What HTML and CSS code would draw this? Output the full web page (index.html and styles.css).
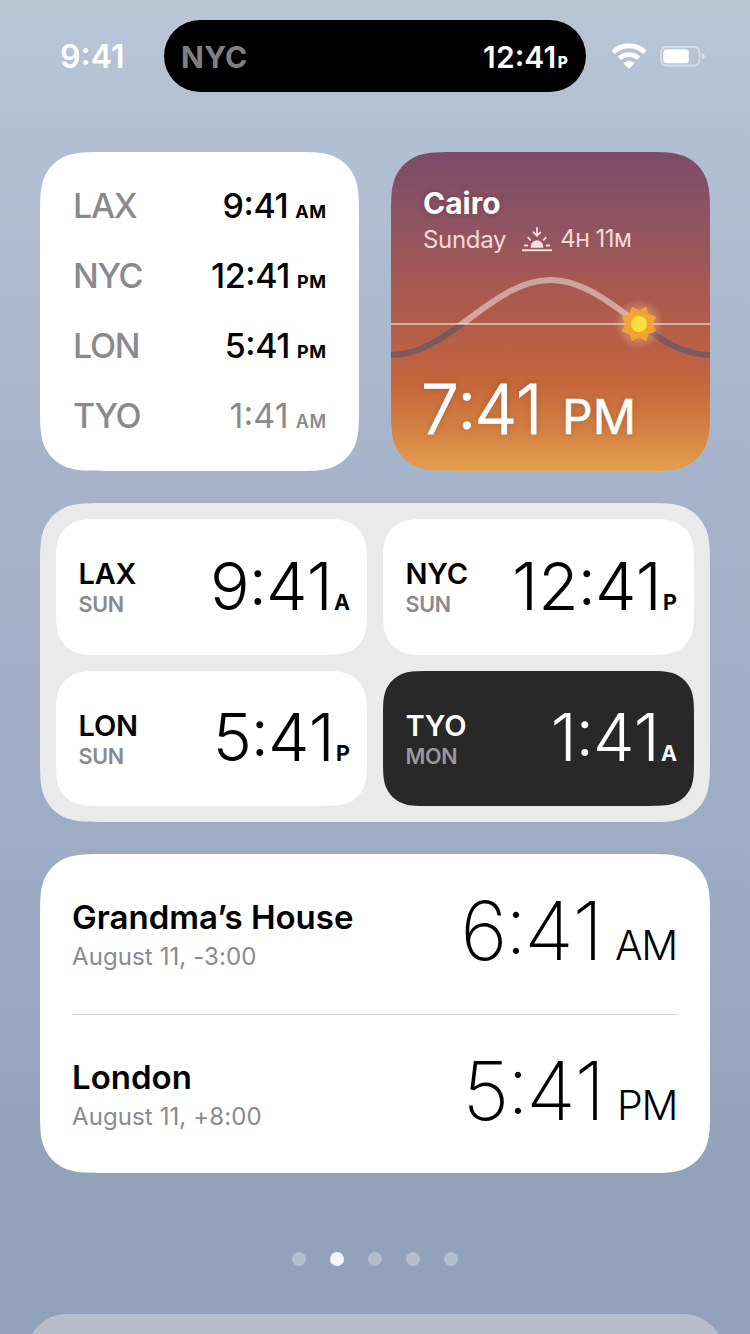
FILE: index.html
```html
<!DOCTYPE html>
<html lang="en">
<head>
<meta charset="utf-8">
<title>World Clock Widgets</title>
<link rel="stylesheet" href="styles.css">
</head>
<body>
<div class="screen">
  <header class="status">
    <div class="status-time">9<s>:</s>41</div>
    <div class="island"><span class="island-city">NYC</span><span class="island-time">12<s>:</s>41<small>P</small></span></div>
    <svg class="wifi" width="36" height="26" viewBox="0 0 36 26"><g fill="none" stroke="#fff"><path d="M2.2 9.2C11 .6 25 .6 33.800 9.200" stroke-width="5"/><path d="M8.300 15.300C13.700 10.300 22.300 10.300 27.700 15.300" stroke-width="4.800"/></g><path d="M12.600 20.500Q12.300 20 12.900 19.600Q18 16.400 23.100 19.600Q23.700 20 23.300 20.500L18.700 25.300Q18 26 17.300 25.300Z" fill="#fff"/></svg>
    <svg class="battery" width="46" height="21" viewBox="0 0 46 21"><rect x="1" y="1" width="38.500" height="18.500" rx="5.500" fill="none" stroke="#fff" stroke-opacity=".45" stroke-width="1.800"/><path d="M42 7Q44.800 8 44.800 10.300T42 13.600Z" fill="#fff" fill-opacity=".5"/><rect x="3.300" y="3.300" width="25.500" height="14" rx="3.300" fill="#fff"/></svg>
  </header>

  <main class="widgets">
    <section class="pair">
      <div class="card list">
        <div class="row"><span class="code">LAX</span><span class="time">9<s>:</s>41</span><span class="ap">AM</span></div>
        <div class="row"><span class="code">NYC</span><span class="time">12<s>:</s>41</span><span class="ap">PM</span></div>
        <div class="row"><span class="code">LON</span><span class="time">5<s>:</s>41</span><span class="ap">PM</span></div>
        <div class="row dim"><span class="code">TYO</span><span class="time">1<s>:</s>41</span><span class="ap">AM</span></div>
      </div>
      <div class="card sky">
        <svg class="curve" width="319" height="319" viewBox="0 0 319 319">
          <defs>
            <clipPath id="day"><rect width="319" height="172"/></clipPath>
            <clipPath id="night"><rect y="172" width="319" height="147"/></clipPath>
            <radialGradient id="glow"><stop offset=".4" stop-color="#ffd9b0" stop-opacity=".45"/><stop offset="1" stop-color="#ffc9a0" stop-opacity="0"/></radialGradient>
          </defs>
          <g fill="none" stroke-width="6">
            <path clip-path="url(#day)" stroke="#fff" stroke-opacity=".45" d="M0 203C58 203 101.500 128 159.500 128S261 203 319 203"/>
            <path clip-path="url(#night)" stroke="#52546c" stroke-opacity=".6" d="M0 203C58 203 101.500 128 159.500 128S261 203 319 203"/>
          </g>
          <path d="M0 172H319" stroke="#fff" stroke-opacity=".5" stroke-width="2"/>
          <circle cx="248" cy="172" r="25" fill="url(#glow)"/>
          <path transform="translate(248 172)" fill="#f3a32f" stroke="#f3a32f" stroke-width="1.600" stroke-linejoin="round" d="M0 -12.500L6.800 -16.200L8.400 -9.800L16.200 -6.700L12.500 0L16.200 6.700L8.400 9.800L6.800 16.200L0 12.500L-6.800 16.200L-8.400 9.800L-16.200 6.700L-12.500 0L-16.200 -6.700L-8.400 -9.800L-6.800 -16.200Z"/>
          <circle cx="248" cy="172" r="8" fill="#fadf43"/>
        </svg>
        <div class="sky-city">Cairo</div>
        <div class="sky-info"><span class="sky-day">Sunday</span>
          <svg width="30" height="25" viewBox="0 0 30 25" fill="none" stroke="#f6dfe0" stroke-width="1.800" stroke-linecap="round"><path d="M0 23.200H30" stroke-linecap="butt" stroke-width="2"/><path d="M8.800 20.700V19.500a6.200 6.200 0 0 1 12.400 0V20.700Z" fill="#f6dfe0" stroke="none"/><path d="M15 1V8.500M11.500 5.300L15 8.700L18.500 5.300M6.200 10.700L8.300 12.800M23.800 10.700L21.700 12.800M2.700 18.500H5.300M24.700 18.500H27.300"/></svg>
          <span class="sky-left">4<small>H</small> 11<small>M</small></span></div>
        <div class="sky-time">7<s>:</s>41<small>PM</small></div>
      </div>
    </section>

    <section class="card tiles">
      <div class="tile"><div class="place"><b>LAX</b><i>SUN</i></div><div class="clock">9<s>:</s>41<small>A</small></div></div>
      <div class="tile"><div class="place"><b>NYC</b><i>SUN</i></div><div class="clock">12<s>:</s>41<small>P</small></div></div>
      <div class="tile low"><div class="place"><b>LON</b><i>SUN</i></div><div class="clock">5<s>:</s>41<small>P</small></div></div>
      <div class="tile low dark"><div class="place"><b>TYO</b><i>MON</i></div><div class="clock">1<s>:</s>41<small>A</small></div></div>
    </section>

    <section class="card cities">
      <div class="city"><div><div class="city-name">Grandma’s House</div><div class="city-date">August 11, -3:00</div></div><div class="city-time">6<s>:</s>41<small>AM</small></div></div>
      <div class="city"><div><div class="city-name">London</div><div class="city-date">August 11, +8:00</div></div><div class="city-time">5<s>:</s>41<small>PM</small></div></div>
    </section>
  </main>

  <nav class="dots"><span></span><span class="on"></span><span></span><span></span><span></span></nav>
  <div class="dock"></div>
</div>
</body>
</html>
```
FILE: styles.css
```css
* { box-sizing: border-box; }
body { margin: 0; }
.screen {
  width: 750px; height: 1334px; overflow: hidden;
  display: flex; flex-direction: column;
  font-family: Inter, "Liberation Sans", sans-serif;
  white-space: nowrap;
  background: linear-gradient(#b8c6d6, #b0bfd2 12%, #a5b4ca 36%, #9eadc6 62%, #93a2bb 88%, #92a1ba);
}
small { font-size: inherit; }
/* raised colon between digits */
s { text-decoration: none; vertical-align: .08em; line-height: 0; }

.status { display: flex; flex: none; height: 152px; padding: 20px 40px 0 60px; align-items: flex-start; }
.status-time { width: 104px; font-size: 32px; font-weight: 600; line-height: 73px; color: #fff; letter-spacing: 0; }
.island {
  width: 422px; height: 72px; padding: 1px 18px 0 17px; border-radius: 36px; background: #000; color: #fff;
  display: flex; flex: none; justify-content: space-between; font-size: 30px; line-height: 72px;
}
.island-city { font-weight: 700; color: #808080; letter-spacing: .3px; }
.island-time { font-weight: 600; letter-spacing: .1px; }
.island-time small { font-size: 15.5px; font-weight: 800; margin-left: 1.5px; }
.wifi { flex: none; margin: 23px 0 0 25px; }
.battery { flex: none; margin: 26px 0 0 13px; }

.widgets { display: flex; flex-direction: column; flex: none; gap: 32px; padding: 0 40px; }
.pair { display: flex; gap: 32px; }
.card { height: 319px; background: #fff; }
.pair .card {
  width: 319px;
  clip-path: path("M67.26 0h184.48c19.37 0 29.05 0 37.78 2.88l1.69 .42c11.39 4.14 20.35 13.1 24.49 24.49c3.3 10.42 3.3 20.1 3.3 39.47v184.48c0 19.37 0 29.05 -2.88 37.78l-.42 1.69c-4.14 11.39 -13.1 20.35 -24.49 24.49c-10.42 3.3 -20.1 3.3 -39.47 3.3h-184.48c-19.37 0 -29.05 0 -37.78 -2.88l-1.69 -.42c-11.39 -4.14 -20.35 -13.1 -24.49 -24.49c-3.3 -10.42 -3.3 -20.1 -3.3 -39.47v-184.48c0 -19.37 0 -29.05 2.88 -37.78l.42 -1.69c4.14 -11.39 13.1 -20.35 24.49 -24.49c10.42 -3.3 20.1 -3.3 39.47 -3.3z");
}
.tiles, .cities {
  clip-path: path("M67.26 0h535.48c19.37 0 29.05 0 37.78 2.88l1.69 .42c11.39 4.14 20.35 13.1 24.49 24.49c3.3 10.42 3.3 20.1 3.3 39.47v184.48c0 19.37 0 29.05 -2.88 37.78l-.42 1.69c-4.14 11.39 -13.1 20.35 -24.49 24.49c-10.42 3.3 -20.1 3.3 -39.47 3.3h-535.48c-19.37 0 -29.05 0 -37.78 -2.88l-1.69 -.42c-11.39 -4.14 -20.35 -13.1 -24.49 -24.49c-3.3 -10.42 -3.3 -20.1 -3.3 -39.47v-184.48c0 -19.37 0 -29.05 2.88 -37.78l.42 -1.69c4.14 -11.39 13.1 -20.35 24.49 -24.49c10.42 -3.3 20.1 -3.3 39.47 -3.3z");
}

.list { padding: 19px 33px 0 33px; }
.row { display: flex; align-items: baseline; height: 70px; line-height: 70px; font-size: 34px; font-weight: 500; }
.code { flex: 1; color: #8a8a8e; letter-spacing: -1.3px; }
.time { letter-spacing: -.4px; }
.ap { font-size: 18px; font-weight: 700; margin-left: 7px; letter-spacing: .6px; margin-right: -.6px; }
.dim .time, .dim .ap { color: #8a8a8e; }
.dim .time { font-weight: 400; letter-spacing: .1px; }
.dim .ap { font-weight: 600; }

.sky {
  position: relative; padding: 33px 32px 0; color: #fff;
  background: linear-gradient(#7b4b69, #8e5462 22%, #aa594f 44%, #b86047 60%, #c5653c 72%, #d27f42 86%, #e29f4e);
}
.curve { position: absolute; left: 0; top: 0; }
.sky-city { font-size: 30px; font-weight: 700; line-height: 36px; text-shadow: 0 0 5px rgba(60, 20, 30, .3); }
.sky-info { display: flex; align-items: center; height: 37px; font-size: 24px; line-height: 36px; color: #f3d9da; }
.sky-info svg { margin: 0 8px 0 16px; }
.sky-day { letter-spacing: -.3px; }
.sky-left { letter-spacing: -.4px; line-height: 37px; }
.sky-left small { font-size: 19px; font-weight: 500; }
.sky-time { position: relative; margin: 109px 0 0 -2px; font-size: 68px; font-weight: 300; -webkit-text-stroke: .9px #fff; line-height: 84px; letter-spacing: -.4px; text-shadow: 0 0 6px rgba(80, 30, 10, .25); }
.sky-time small { font-size: 48px; font-weight: 400; -webkit-text-stroke: .5px #fff; margin-left: 20px; letter-spacing: 0; }

.tiles { background: #eaeaea; padding: 16px; display: grid; grid-template: 136px 135px / 311px 311px; gap: 16px; }
.tile {
  background: #fff; padding: 0 17px 0 22.5px; display: flex; justify-content: space-between;
  clip-path: path("M48.92 0h213.16c14.09 0 21.13 0 27.48 2.09l1.23 .31c8.28 3.01 14.8 9.53 17.81 17.81c2.4 7.58 2.4 14.62 2.4 28.71v38.16c0 14.09 0 21.13 -2.09 27.48l-.31 1.23c-3.01 8.28 -9.53 14.8 -17.81 17.81c-7.58 2.4 -14.62 2.4 -28.71 2.4h-213.16c-14.09 0 -21.13 0 -27.48 -2.09l-1.23 -.31c-8.28 -3.01 -14.8 -9.53 -17.81 -17.81c-2.4 -7.58 -2.4 -14.62 -2.4 -28.71v-38.16c0 -14.09 0 -21.13 2.09 -27.48l.31 -1.23c3.01 -8.28 9.53 -14.8 17.81 -17.81c7.58 -2.4 14.62 -2.4 28.71 -2.4z");
}
.low {
  clip-path: path("M48.92 0h213.16c14.09 0 21.13 0 27.48 2.09l1.23 .31c8.28 3.01 14.8 9.53 17.81 17.81c2.4 7.58 2.4 14.62 2.4 28.71v37.16c0 14.09 0 21.13 -2.09 27.48l-.31 1.23c-3.01 8.28 -9.53 14.8 -17.81 17.81c-7.58 2.4 -14.62 2.4 -28.71 2.4h-213.16c-14.09 0 -21.13 0 -27.48 -2.09l-1.23 -.31c-8.28 -3.01 -14.8 -9.53 -17.81 -17.81c-2.4 -7.58 -2.4 -14.62 -2.4 -28.71v-37.16c0 -14.09 0 -21.13 2.09 -27.48l.31 -1.23c3.01 -8.28 9.53 -14.8 17.81 -17.81c7.58 -2.4 14.62 -2.4 28.71 -2.4z");
}
.place { display: flex; flex-direction: column; padding-top: 38px; }
.place b { font-size: 29px; font-weight: 600; line-height: 34px; letter-spacing: -.2px; }
.place i { font-size: 21.5px; font-weight: 600; font-style: normal; line-height: 26px; color: #8a8a8e; letter-spacing: -.3px; }
.clock { font-size: 66px; font-weight: 300; line-height: 134px; letter-spacing: .3px; }
.clock s, .sky-time s { margin: 0 -1.5px; }
.low .clock { line-height: 133px; }
.clock small { font-size: 21.5px; font-weight: 700; letter-spacing: 0; margin-left: 1px; }
.dark { background: #282828; color: #fff; }
.dark .place i { color: #98989f; }

.cities { padding: 0 33px 0 32px; }
.city { display: flex; justify-content: space-between; height: 160px; padding-top: 42px; }
.city + .city { border-top: 1px solid #d5d8d9; padding-top: 41px; }
.city-name { font-size: 33px; font-weight: 600; line-height: 42px; }
.city-date { font-size: 24px; line-height: 38px; color: #8a8a8e; letter-spacing: .1px; }
.city-time { font-size: 81px; font-weight: 200; line-height: 71px; letter-spacing: -.3px; }
.city-time s { margin: 0 -2.5px; }
.city-time small { font-size: 41px; font-weight: 300; margin-left: 12px; letter-spacing: -1.3px; }

.dots { display: flex; flex: none; justify-content: center; gap: 24px; margin-top: 79px; }
.dots span { width: 14px; height: 14px; border-radius: 50%; background: #b4bdcc; }
.dots .on { background: #f1f6fb; }
.dock { margin: 48px 26px 0; height: 160px; flex: none; border-radius: 40px / 42px; background: #b6becc; }
```
